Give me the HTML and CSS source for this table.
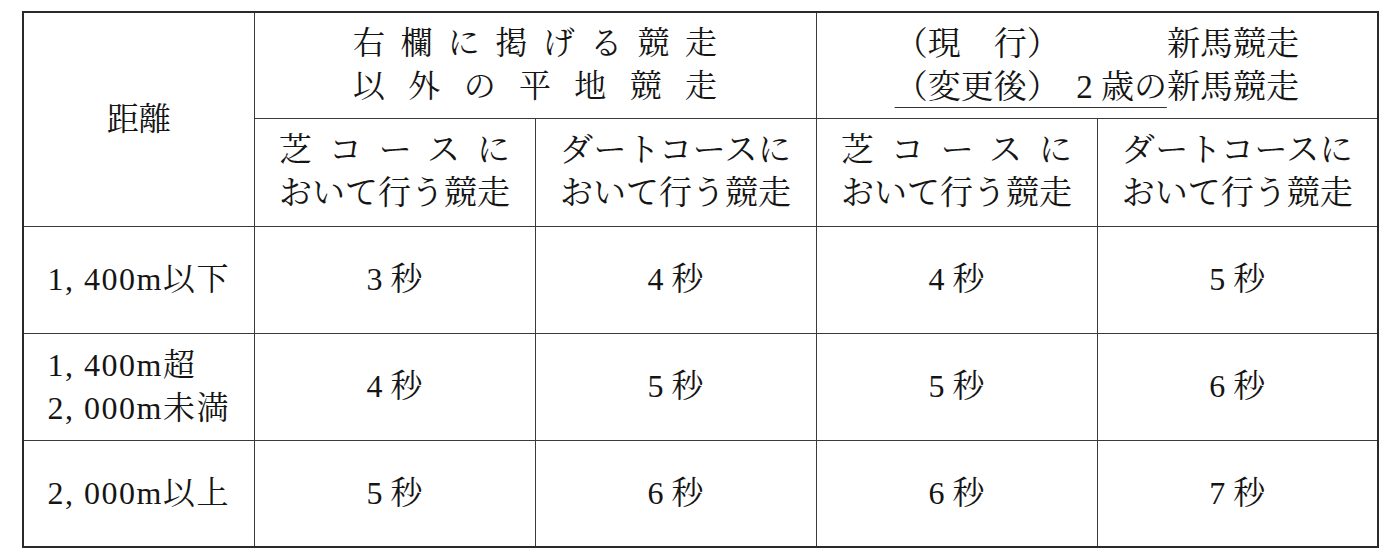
FILE: index.html
```html
<!DOCTYPE html>
<html lang="ja">
<head>
<meta charset="utf-8">
<title>距離別 時間表</title>
<link rel="stylesheet" href="styles.css">
</head>
<body>
<div class="page">
<table class="tbl">
  <colgroup>
    <col class="c-dist">
    <col class="c-val">
    <col class="c-val">
    <col class="c-val">
    <col class="c-val">
  </colgroup>
  <thead>
    <tr class="r-h1">
      <th rowspan="2" class="dist-head">距離</th>
      <th colspan="2"><span class="wide"><span class="ln">右欄に掲げる競走</span><span class="ln">以外の平地競走</span></span></th>
      <th colspan="2">
        <span class="newbox">
          <span class="nl1"><span>（現　行）</span><span>新馬競走</span></span>
          <span class="nl2"><span class="ul">（変更後）　2 歳の</span>新馬競走</span>
        </span>
      </th>
    </tr>
    <tr class="r-h2">
      <th><span class="jst"><span class="ln">芝コースに</span><span class="ln">おいて行う競走</span></span></th>
      <th><span class="jst"><span class="ln">ダートコースに</span><span class="ln">おいて行う競走</span></span></th>
      <th><span class="jst"><span class="ln">芝コースに</span><span class="ln">おいて行う競走</span></span></th>
      <th><span class="jst"><span class="ln">ダートコースに</span><span class="ln">おいて行う競走</span></span></th>
    </tr>
  </thead>
  <tbody>
    <tr class="r-d">
      <td class="dist"><span class="dl">1,&nbsp;400m以下</span></td>
      <td>3 秒</td><td>4 秒</td><td>4 秒</td><td>5 秒</td>
    </tr>
    <tr class="r-d">
      <td class="dist"><span class="dl">1,&nbsp;400m超<br>2,&nbsp;000m未満</span></td>
      <td>4 秒</td><td>5 秒</td><td>5 秒</td><td>6 秒</td>
    </tr>
    <tr class="r-d">
      <td class="dist"><span class="dl">2,&nbsp;000m以上</span></td>
      <td>5 秒</td><td>6 秒</td><td>6 秒</td><td>7 秒</td>
    </tr>
  </tbody>
</table>
</div>
</body>
</html>
```

FILE: styles.css
```css
html, body {
  margin: 0;
  padding: 0;
  background: #ffffff;
}

.page {
  padding: 11px 0 0 22px;
}

.tbl {
  border-collapse: collapse;
  table-layout: fixed;
  width: 1357px;
  border: 2px solid #2a2a2a;
  font-family: "Liberation Serif", "Noto Serif CJK JP", "Noto Sans CJK JP", serif;
  font-size: 32px;
  line-height: 43px;
  color: #151515;
}

.c-dist { width: 231px; }
.c-val { width: 281px; }

.tbl th,
.tbl td {
  border: 1px solid #3a3a3a;
  padding: 0;
  font-weight: normal;
  text-align: center;
  vertical-align: middle;
}

.r-h1 { height: 106px; }
.r-h2 { height: 108px; }
.r-d { height: 107px; }

.ln {
  display: block;
}

.wide {
  display: inline-block;
  width: 364px;
  text-align: justify;
  text-align-last: justify;
  text-justify: inter-character;
}

.jst {
  display: inline-block;
  font-size: 33px;
  text-align: justify;
  text-align-last: justify;
  text-justify: inter-character;
}

.newbox {
  display: inline-block;
  font-size: 33px;
  text-align: left;
  margin-top: 2px;
}

.nl1 {
  display: flex;
  justify-content: space-between;
}

.nl2 {
  display: block;
  white-space: nowrap;
}

.ul {
  text-decoration: underline;
  text-decoration-thickness: 1px;
  text-underline-offset: 9px;
  text-decoration-color: #333;
}

.dist {
  text-align: center;
}

.dl {
  display: inline-block;
  text-align: left;
  letter-spacing: 1.5px;
}
```
